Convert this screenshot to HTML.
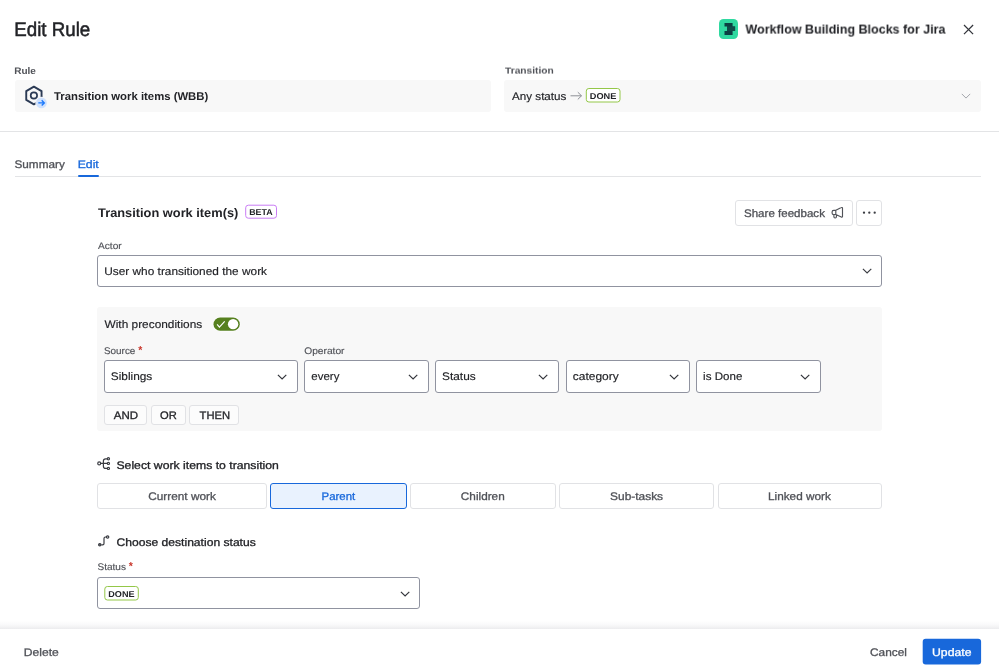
<!DOCTYPE html>
<html lang="en">
<head>
<meta charset="utf-8">
<title>Edit Rule</title>
<style>
*{box-sizing:border-box;margin:0;padding:0}
html,body{width:999px;height:671px;overflow:hidden;background:#fff}
body{font-family:"Liberation Sans",sans-serif;color:#292a2e;position:relative;font-size:12px}
.a{position:absolute}
.t{position:absolute;white-space:nowrap;line-height:normal;transform-origin:0 0}
.b{font-weight:700}
.gbox{position:absolute;background:#f8f8f8;border-radius:3px}
.sel{position:absolute;height:32.5px;border:1px solid #9093a0;border-radius:3px;background:#fff}
.btn{position:absolute;height:25.5px;border:1px solid #e1e2e5;border-radius:3px;background:#fff}
.log{position:absolute;top:405px;height:19.5px;border:1px solid #e1e2e5;border-radius:3px;background:#fcfcfc}
.loz{position:absolute;border:1px solid #94c748;border-radius:3px;background:#fff;height:14.5px}
</style>
</head>
<body>
<div id="root" style="position:absolute;left:0;top:0;width:999px;height:671px;will-change:transform">
<!-- header: app logo + close -->
<div class="a" style="left:718.8px;top:19px;width:19.5px;height:19.7px;border-radius:4.5px;background:#2fd9a0"></div>
<svg class="a" style="left:718.8px;top:19px" width="19.5" height="19.7" viewBox="0 0 19.5 19.7"><path d="M5.500 4h8.100v3.500h2.500v4.500h-2.500v3.900h-8.100v-3.900h2.600v-4.500h-2.600z" fill="#0b3f42"/><rect x="8.100" y="7.500" width="8" height="4.500" fill="#104c49"/></svg>
<svg class="a" style="left:962.7px;top:23.500px" width="11.500" height="11.500" viewBox="0 0 11.500 11.500"><path d="M1 1l9.100 9.100M10.100 1l-9.100 9.100" stroke="#33353b" stroke-width="1.250" fill="none"/></svg>

<!-- rule / transition boxes -->
<div class="gbox" style="left:14.500px;top:79.500px;width:476px;height:32px"></div>
<div class="gbox" style="left:504.300px;top:79.500px;width:476.500px;height:32px"></div>
<svg class="a" style="left:22px;top:83px" width="28" height="28" viewBox="0 0 28 28">
<path d="M11.900 3.650l7.660 4.420v8.860l-7.660 4.420-7.660-4.420v-8.860z" fill="none" stroke="#2b3a55" stroke-width="1.900" stroke-linejoin="round"/>
<circle cx="11.900" cy="12.500" r="3.200" fill="none" stroke="#2b3a55" stroke-width="1.700"/>
<circle cx="19.400" cy="19.900" r="6.100" fill="#f8f8f8"/>
<circle cx="19.400" cy="19.900" r="5.400" fill="#cfe1fd"/>
<path d="M16.300 19.900h5.600M19.700 17.300l2.600 2.600-2.600 2.600" stroke="#1d7afc" stroke-width="1.400" fill="none"/>
</svg>
<svg class="a" style="left:570px;top:91px" width="13" height="10" viewBox="0 0 13 10"><path d="M.5 4.800h11M7.800 1.200l3.700 3.600-3.700 3.600" stroke="#8d9096" stroke-width="1" fill="none"/></svg>
<svg class="a" style="left:584px;top:86px" width="40" height="20" viewBox="584 86 40 20"><rect x="586.300" y="88.500" width="33.700" height="13.500" rx="2.600" fill="#fff" stroke="#94c748" stroke-width="1"/></svg>
<svg class="a" style="left:961px;top:93px" width="10" height="6" viewBox="0 0 10 6"><path d="M.8 .9l4.200 4.200 4.200-4.200" stroke="#a3a5ab" stroke-width="1" fill="none"/></svg>

<div class="a" style="left:0;top:131px;width:999px;height:1px;background:#e3e4e6"></div>

<!-- tabs -->
<div class="a" style="left:15px;top:176px;width:966px;height:1px;background:#e3e4e6"></div>
<div class="a" style="left:78px;top:174.500px;width:21px;height:2.500px;background:#1868db;border-radius:1px"></div>

<!-- title row -->
<svg class="a" style="left:243px;top:202px" width="38" height="20" viewBox="243 202 38 20"><rect x="245.700" y="205.200" width="30.800" height="13" rx="2.600" fill="#fff" stroke="#c97cf4" stroke-width="1"/></svg>
<div class="btn" style="left:734.500px;top:200px;width:118.400px"></div>
<svg class="a" style="left:829px;top:204px" width="17" height="17" viewBox="829 204 17 17"><path d="M835.800 210.300H833.700a1.600 1.600 0 0 0-1.600 1.600v1a1.600 1.600 0 0 0 1.600 1.600H835.800M835.800 210.300L841.300 207.600a.8 .8 0 0 1 1.200 .7v8.100a.8 .8 0 0 1-1.200 .7L835.800 214.500zM833.900 214.500v2.300a1.150 1.150 0 0 0 1.150 1.150h.2a1.150 1.150 0 0 0 1.150-1.150v-2" stroke="#505258" stroke-width="1.150" fill="none" stroke-linejoin="round"/></svg>
<div class="btn" style="left:856.400px;top:200px;width:25.500px"></div>
<svg class="a" style="left:860px;top:209px" width="18" height="8" viewBox="860 209 18 8"><circle cx="864" cy="212.700" r="1.150" fill="#3a3c42"/><circle cx="869.300" cy="212.700" r="1.150" fill="#3a3c42"/><circle cx="874.700" cy="212.700" r="1.150" fill="#3a3c42"/></svg>

<!-- actor -->
<div class="sel" style="left:97px;top:254.700px;width:785px"></div>
<svg class="a" style="left:862px;top:268px" width="10" height="6" viewBox="0 0 10 6"><path d="M.9 .9l4.200 4.100 4.200-4.100" stroke="#3a3c42" stroke-width="1.150" fill="none"/></svg>

<!-- preconditions panel -->
<div class="gbox" style="left:97px;top:306.600px;width:785px;height:124.300px"></div>
<svg class="a" style="left:210px;top:314px" width="34" height="21" viewBox="210 314 34 21"><rect x="212.800" y="316.800" width="27.700" height="14.700" rx="7.350" fill="#fdfdfd"/><rect x="213.500" y="317.500" width="26.300" height="13.300" rx="6.650" fill="#56801f"/><circle cx="233.100" cy="324.150" r="5.200" fill="#fff"/><path d="M217.100 324.400l2.300 2.700 5.300-5.800" stroke="#fff" stroke-width="1.200" fill="none"/></svg>
<div class="t" style="left:138.300px;top:343.500px;font-size:10.500px;color:#c9372c;font-weight:700">*</div>

<div class="sel" style="left:103.800px;top:360px;width:194px"></div>
<div class="sel" style="left:304px;top:360px;width:124.500px"></div>
<div class="sel" style="left:434.800px;top:360px;width:124.500px"></div>
<div class="sel" style="left:565.500px;top:360px;width:124.500px"></div>
<div class="sel" style="left:696.200px;top:360px;width:124.500px"></div>
<svg class="a" style="left:276.800px;top:373.700px" width="10" height="6" viewBox="0 0 10 6"><path d="M.9 .9l4.200 4.100 4.200-4.100" stroke="#33353b" stroke-width="1.200" fill="none"/></svg>
<svg class="a" style="left:407.500px;top:373.700px" width="10" height="6" viewBox="0 0 10 6"><path d="M.9 .9l4.200 4.100 4.200-4.100" stroke="#33353b" stroke-width="1.200" fill="none"/></svg>
<svg class="a" style="left:538.300px;top:373.700px" width="10" height="6" viewBox="0 0 10 6"><path d="M.9 .9l4.200 4.100 4.200-4.100" stroke="#33353b" stroke-width="1.200" fill="none"/></svg>
<svg class="a" style="left:669.300px;top:373.700px" width="10" height="6" viewBox="0 0 10 6"><path d="M.9 .9l4.200 4.100 4.200-4.100" stroke="#33353b" stroke-width="1.200" fill="none"/></svg>
<svg class="a" style="left:800px;top:373.700px" width="10" height="6" viewBox="0 0 10 6"><path d="M.9 .9l4.200 4.100 4.200-4.100" stroke="#33353b" stroke-width="1.200" fill="none"/></svg>

<div class="log" style="left:103.800px;width:43.200px"></div>
<div class="log" style="left:150.600px;width:35.300px"></div>
<div class="log" style="left:189.400px;width:50px"></div>

<!-- select work items -->
<svg class="a" style="left:95px;top:455px" width="18" height="18" viewBox="95 455 18 18"><g stroke="#3a3c42" stroke-width="1.200" fill="none"><circle cx="99.200" cy="463.400" r="1.450"/><path d="M100.700 463.400H107.200M103.400 463.400V461a2.200 2.200 0 0 1 2.200-2.200H107.200M103.400 463.400V466.200a2.200 2.200 0 0 0 2.200 2.200H107.200"/><circle cx="108.400" cy="458.800" r="1.100"/><circle cx="108.400" cy="463.400" r="1.100"/><circle cx="108.400" cy="468.400" r="1.100"/></g></svg>
<div class="btn" style="left:97px;top:483px;width:170px"></div>
<div class="btn" style="left:270.300px;top:483px;width:136.500px;background:#e9f2fe;border-color:#1868db"></div>
<div class="btn" style="left:410px;top:483px;width:145.500px"></div>
<div class="btn" style="left:559px;top:483px;width:155.300px"></div>
<div class="btn" style="left:717.500px;top:483px;width:164.500px"></div>

<!-- destination -->
<svg class="a" style="left:95px;top:532px" width="18" height="18" viewBox="95 532 18 18"><g stroke="#3a3c42" stroke-width="1.200" fill="none"><circle cx="99.800" cy="544.800" r="1.200" fill="#7a7c82"/><path d="M101.400 544.800H102.600a1.400 1.400 0 0 0 1.400-1.400V538.400a1.400 1.400 0 0 1 1.400-1.400H106.300"/><circle cx="107.600" cy="537" r="1.200"/></g></svg>
<div class="t" style="left:128.800px;top:559.500px;font-size:10.500px;color:#c9372c;font-weight:700">*</div>
<div class="sel" style="left:97px;top:576.500px;width:323px"></div>
<svg class="a" style="left:400px;top:590.500px" width="10" height="6" viewBox="0 0 10 6"><path d="M.9 .9l4.200 4.100 4.200-4.100" stroke="#33353b" stroke-width="1.200" fill="none"/></svg>
<svg class="a" style="left:102px;top:584px" width="40" height="20" viewBox="102 584 40 20"><rect x="104.800" y="586.500" width="33.500" height="13.500" rx="2.600" fill="#fff" stroke="#94c748" stroke-width="1"/></svg>

<!-- footer -->
<div class="a" style="left:0;top:621px;width:999px;height:8px;background:linear-gradient(to bottom,rgba(255,255,255,0) 0%,#fafafb 40%,#f3f3f4 75%,#ececee 100%)"></div>
<div class="a" style="left:0;top:629px;width:999px;height:42px;background:#fff"></div>
<svg class="a" style="left:920px;top:636px" width="64" height="32" viewBox="920 636 64 32"><rect x="922.700" y="638.800" width="58.400" height="25.700" rx="3" fill="#1868db"/></svg>

<div class="t" style="left:14px;top:17px;font-size:19.8px;color:#222327;transform:matrix(0.9470,0,0.001,1,0.22,0.55);-webkit-text-stroke:0.5px #222327">Edit Rule</div>
<div class="t b" style="left:745px;top:21px;font-size:13px;color:#222327;transform:matrix(0.9622,0,0.001,1,0.50,0.60)">Workflow Building Blocks for Jira</div>
<div class="t b" style="left:14px;top:64px;font-size:9.5px;color:#505258;transform:matrix(1.0513,0,0.001,1,0.21,0.60)">Rule</div>
<div class="t b" style="left:505px;top:64px;font-size:9.5px;color:#505258;transform:matrix(1.0726,0,0.001,1,0.00,0.60)">Transition</div>
<div class="t b" style="left:54px;top:89px;font-size:11.2px;color:#222327;transform:matrix(1.0129,0,0.001,1,0.00,0.70)">Transition work items (WBB)</div>
<div class="t" style="left:512px;top:90px;font-size:11px;color:#222327;transform:matrix(1.0588,0,0.001,1,0.00,0.01);-webkit-text-stroke:0.15px #222327">Any status</div>
<div class="t b" style="left:589px;top:91px;font-size:8.5px;color:#222327;transform:matrix(1.0821,0,0.001,1,0.76,0.12)">DONE</div>
<div class="t" style="left:14px;top:157px;font-size:11px;color:#505258;transform:matrix(1.0695,0,0.001,1,0.47,0.75);-webkit-text-stroke:0.3px #505258">Summary</div>
<div class="t" style="left:77px;top:157px;font-size:11px;color:#1868db;transform:matrix(1.1123,0,0.001,1,0.67,0.75);-webkit-text-stroke:0.3px #1868db">Edit</div>
<div class="t b" style="left:98px;top:206px;font-size:12.5px;color:#222327;transform:matrix(1.0250,0,0.001,1,0.04,0.00)">Transition work item(s)</div>
<div class="t b" style="left:249px;top:207px;font-size:8.5px;color:#222327;transform:matrix(1.0437,0,0.001,1,0.18,0.32)">BETA</div>
<div class="t" style="left:743px;top:206px;font-size:11px;color:#505258;transform:matrix(1.0502,0,0.001,1,0.97,0.55);-webkit-text-stroke:0.3px #505258">Share feedback</div>
<div class="t" style="left:98px;top:239px;font-size:9.5px;color:#505258;transform:matrix(1.0682,0,0.001,1,0.00,0.63);-webkit-text-stroke:0.15px #505258">Actor</div>
<div class="t" style="left:104px;top:264px;font-size:11px;color:#222327;transform:matrix(1.0782,0,0.001,1,0.19,0.51);-webkit-text-stroke:0.15px #222327">User who transitioned the work</div>
<div class="t" style="left:104px;top:318px;font-size:11px;color:#222327;transform:matrix(1.0792,0,0.001,1,0.50,0.31);-webkit-text-stroke:0.15px #222327">With preconditions</div>
<div class="t" style="left:103px;top:345px;font-size:9.5px;color:#505258;transform:matrix(1.0427,0,0.001,1,0.98,0.43);-webkit-text-stroke:0.15px #505258">Source</div>
<div class="t" style="left:304px;top:345px;font-size:9.5px;color:#505258;transform:matrix(1.0738,0,0.001,1,0.23,0.43);-webkit-text-stroke:0.15px #505258">Operator</div>
<div class="t" style="left:110px;top:370px;font-size:11px;color:#222327;transform:matrix(1.0781,0,0.001,1,0.76,0.21);-webkit-text-stroke:0.15px #222327">Siblings</div>
<div class="t" style="left:311px;top:370px;font-size:11px;color:#222327;transform:matrix(1.0453,0,0.001,1,0.28,0.21);-webkit-text-stroke:0.15px #222327">every</div>
<div class="t" style="left:442px;top:370px;font-size:11px;color:#222327;transform:matrix(1.0777,0,0.001,1,0.06,0.21);-webkit-text-stroke:0.15px #222327">Status</div>
<div class="t" style="left:572px;top:370px;font-size:11px;color:#222327;transform:matrix(1.0898,0,0.001,1,0.76,0.21);-webkit-text-stroke:0.15px #222327">category</div>
<div class="t" style="left:703px;top:370px;font-size:11px;color:#222327;transform:matrix(1.0510,0,0.001,1,0.11,0.21);-webkit-text-stroke:0.15px #222327">is Done</div>
<div class="t" style="left:113px;top:408px;font-size:11px;color:#222327;transform:matrix(1.0462,0,0.001,1,0.80,0.75);-webkit-text-stroke:0.3px #222327">AND</div>
<div class="t" style="left:160px;top:408px;font-size:11px;color:#222327;transform:matrix(1.0159,0,0.001,1,0.05,0.75);-webkit-text-stroke:0.3px #222327">OR</div>
<div class="t" style="left:199px;top:408px;font-size:11px;color:#222327;transform:matrix(1.0188,0,0.001,1,0.60,0.75);-webkit-text-stroke:0.3px #222327">THEN</div>
<div class="t" style="left:116px;top:459px;font-size:11px;color:#222327;transform:matrix(1.1117,0,0.001,1,0.44,0.25);-webkit-text-stroke:0.3px #222327">Select work items to transition</div>
<div class="t" style="left:148px;top:489px;font-size:11px;color:#505258;transform:matrix(1.0736,0,0.001,1,0.26,0.75);-webkit-text-stroke:0.3px #505258">Current work</div>
<div class="t" style="left:321px;top:489px;font-size:11px;color:#1868db;transform:matrix(1.0394,0,0.001,1,0.52,0.75);-webkit-text-stroke:0.3px #1868db">Parent</div>
<div class="t" style="left:460px;top:489px;font-size:11px;color:#505258;transform:matrix(1.0700,0,0.001,1,0.86,0.75);-webkit-text-stroke:0.3px #505258">Children</div>
<div class="t" style="left:610px;top:489px;font-size:11px;color:#505258;transform:matrix(1.0839,0,0.001,1,0.06,0.75);-webkit-text-stroke:0.3px #505258">Sub-tasks</div>
<div class="t" style="left:767px;top:489px;font-size:11px;color:#505258;transform:matrix(1.0707,0,0.001,1,1.00,0.75);-webkit-text-stroke:0.3px #505258">Linked work</div>
<div class="t" style="left:116px;top:536px;font-size:11px;color:#222327;transform:matrix(1.1006,0,0.001,1,0.45,0.25);-webkit-text-stroke:0.3px #222327">Choose destination status</div>
<div class="t" style="left:97px;top:561px;font-size:9.5px;color:#505258;transform:matrix(1.0590,0,0.001,1,0.47,0.43);-webkit-text-stroke:0.15px #505258">Status</div>
<div class="t b" style="left:108px;top:588px;font-size:8.5px;color:#222327;transform:matrix(1.0737,0,0.001,1,0.26,0.62)">DONE</div>
<div class="t" style="left:23px;top:646px;font-size:11px;color:#505258;transform:matrix(1.1024,0,0.001,1,0.77,0.05);-webkit-text-stroke:0.3px #505258">Delete</div>
<div class="t" style="left:869px;top:645px;font-size:11px;color:#505258;transform:matrix(1.0797,0,0.001,1,0.96,0.85);-webkit-text-stroke:0.3px #505258">Cancel</div>
<div class="t" style="left:931px;top:645px;font-size:11px;color:#ffffff;transform:matrix(1.1130,0,0.001,1,0.97,0.85);-webkit-text-stroke:0.3px #ffffff">Update</div>
</div>
</body>
</html>
